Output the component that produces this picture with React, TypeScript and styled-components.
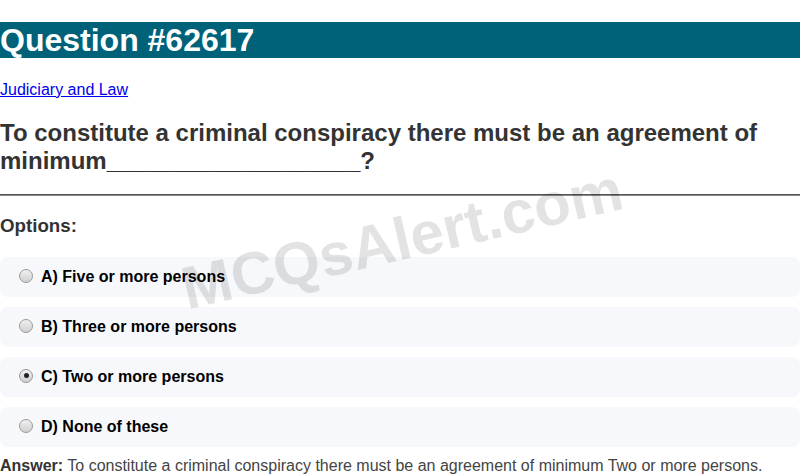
import React from 'react';
import styled, { createGlobalStyle } from 'styled-components';

const GlobalStyle = createGlobalStyle`
  body {
    margin: 0;
    font-family: "Liberation Sans", Arial, sans-serif;
    background: #fff;
  }
`;

const Page = styled.div`
  position: relative;
  overflow: hidden;
`;

const Title = styled.h1`
  margin: 21.5px 0 22.5px;
  font-size: 32px;
  font-weight: bold;
  line-height: 36.8px;
  color: #fff;
  background-color: #006279;
`;

const Category = styled.p`
  margin: 16px 0;
  font-size: 16px;
  line-height: 18.4px;

  a {
    color: #0000ee;
    text-decoration: underline;
  }
`;

const QuestionText = styled.h2`
  margin: 19.92px 0 19.5px;
  font-size: 24px;
  line-height: 27.6px;
  font-weight: bold;
  color: #333;
`;

const Rule = styled.hr`
  margin: 8px 0;
  border: none;
  border-top: 1px solid #555;
  border-bottom: 1px solid #888;
`;

const OptionsHeading = styled.h3`
  margin: 19.5px 0 20.5px;
  font-size: 18.72px;
  line-height: 21.5px;
  font-weight: bold;
  color: #333;
`;

const OptionList = styled.div`
  display: flex;
  flex-direction: column;
  gap: 10px;
`;

const Option = styled.label`
  display: flex;
  align-items: center;
  gap: 8px;
  height: 40px;
  padding: 0 20px;
  border-radius: 8px;
  background-color: #f7f8fc;
  font-size: 16px;
  font-weight: bold;
  color: #000;
`;

const Radio = styled.span<{ checked?: boolean }>`
  position: relative;
  width: 12px;
  height: 12px;
  margin-top: -3px;
  margin-left: -1px;
  border-radius: 50%;
  border: 1px solid #9a9a9a;
  background: linear-gradient(#f0f0f0, #d0d0d0);
  flex-shrink: 0;

  ${({ checked }) =>
    checked
      ? `
        &::after {
          content: '';
          position: absolute;
          left: 3.5px; top: 3.5px;
          width: 5px; height: 5px;
          border-radius: 50%;
          background: #222;
        }
      `
      : ''}
`;

const Answer = styled.p`
  margin: 10px 0;
  font-size: 16px;
  line-height: 18.4px;
  color: #444;

  strong {
    color: #333;
  }
`;

const Watermark = styled.div`
  position: absolute;
  left: 402px;
  top: 239px;
  transform: translate(-50%, -50%) rotate(-13deg);
  font-size: 60px;
  font-weight: bold;
  white-space: nowrap;
  color: rgba(0, 0, 0, 0.11);
  pointer-events: none;
`;

const options = [
  { key: 'A', text: 'Five or more persons' },
  { key: 'B', text: 'Three or more persons' },
  { key: 'C', text: 'Two or more persons', checked: true },
  { key: 'D', text: 'None of these' },
];

export default function App() {
  return (
    <>
      <GlobalStyle />
      <Page>
        <Title>Question #62617</Title>
        <Category>
          <a href="#">Judiciary and Law</a>
        </Category>
        <QuestionText>
          To constitute a criminal conspiracy there must be an agreement of
          minimum___________________?
        </QuestionText>
        <Rule />
        <OptionsHeading>Options:</OptionsHeading>
        <OptionList>
          {options.map((o) => (
            <Option key={o.key}>
              <Radio checked={o.checked} />
              {o.key}) {o.text}
            </Option>
          ))}
        </OptionList>
        <Answer>
          <strong>Answer:</strong> To constitute a criminal conspiracy there
          must be an agreement of minimum Two or more persons.
        </Answer>
        <Watermark>MCQsAlert.com</Watermark>
      </Page>
    </>
  );
}
